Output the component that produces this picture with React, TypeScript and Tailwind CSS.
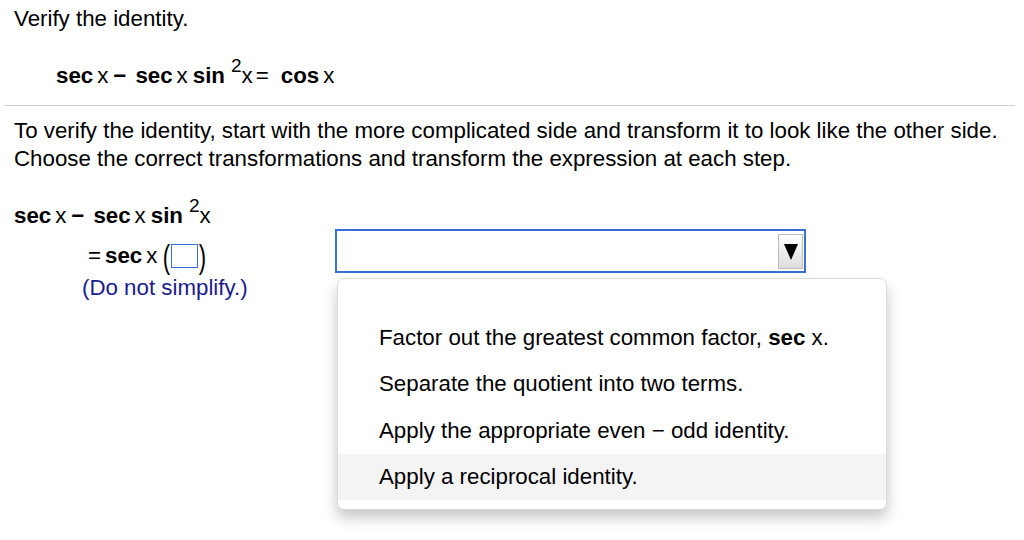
import React from "react";

function Sup({ children }: { children: React.ReactNode }) {
  return <span className="relative top-[-11px] text-[19px] font-normal ml-[6px]">{children}</span>;
}

function LeftSide() {
  return (
    <>
      <b>sec</b>
      <span className="ml-[4px]">x</span>
      <b className="ml-[5px]">−</b>
      <b className="ml-[9px]">sec</b>
      <span className="ml-[4px]">x</span>
      <b className="ml-[5px]">sin</b>
      <Sup>2</Sup>
      <span>x</span>
    </>
  );
}

const options = [
  <>Factor out the greatest common factor, <b>sec</b> x.</>,
  <>Separate the quotient into two terms.</>,
  <>Apply the appropriate even − odd identity.</>,
  <>Apply a reciprocal identity.</>,
];

export default function App() {
  return (
    <div className="w-[1024px] h-[540px] overflow-hidden bg-white text-black font-['Liberation_Sans',Arial,sans-serif] text-[22.3px]">
      <div className="pl-[14px] pt-[6px] leading-[26px]">Verify the identity.</div>
      <div className="pl-[56px] mt-[31px] leading-[26px] whitespace-nowrap">
        <LeftSide />
        <span className="ml-[3px]">=</span>
        <b className="ml-[12px]">cos</b>
        <span className="ml-[4px]">x</span>
      </div>
      <div className="mt-[15px] ml-[4px] w-[1011px] h-px bg-[#cdd0d8]" />
      <div className="pl-[14px] mt-[11px] leading-[28px]">
        <div>To verify the identity, start with the more complicated side and transform it to look like the other side.</div>
        <div>Choose the correct transformations and transform the expression at each step.</div>
      </div>
      <div className="mt-[30px]">
        <div className="pl-[14px] leading-[26px] whitespace-nowrap">
          <LeftSide />
        </div>
        <div className="flex items-start">
          <div className="w-[335px] shrink-0 pl-[83px]">
            <div className="flex items-center mt-[9px] h-[34px] pl-[5px] whitespace-nowrap">
              <span>=</span>
              <b className="ml-[4px]">sec</b>
              <span className="ml-[4px]">x</span>
              <span className="ml-[5px] w-[9px] flex justify-center text-[34px] leading-[34px] font-light scale-x-[0.65]">(</span>
              <span className="w-[27px] h-[24px] border-[1.5px] border-[#3a6fd8] inline-block" />
              <span className="w-[9px] flex justify-center text-[34px] leading-[34px] font-light scale-x-[0.65]">)</span>
            </div>
            <div className="text-[#1c1c8e] leading-[24px] mt-[3px] -ml-[1px]">(Do not simplify.)</div>
          </div>
          <div className="relative -mt-[1px]">
            <div className="w-[471px] h-[44px] border-2 border-[#3a6fd8] bg-white flex items-center justify-end pr-[1px]">
              <div className="w-[25px] h-[35px] border border-[#bdbdbd] bg-gradient-to-b from-[#fdfdfd] to-[#dedede] flex items-center justify-center">
                <svg width="14" height="17" viewBox="0 0 14 17">
                  <polygon points="0,1 14,1 7,17" fill="#000" />
                </svg>
              </div>
            </div>
            <div className="absolute left-[2px] top-[49px] w-[550px] bg-white border border-[#dadada] rounded-[7px] shadow-[0_8px_14px_rgba(0,0,0,0.22)] pt-[35px] pb-[9px] overflow-hidden">
              {options.map((o, i) => (
                <div
                  key={i}
                  className={`h-[46.5px] flex items-center pl-[41px] ${i === 3 ? "bg-[#f4f4f4]" : ""}`}
                >
                  <span className="whitespace-pre">{o}</span>
                </div>
              ))}
            </div>
          </div>
        </div>
      </div>
    </div>
  );
}
